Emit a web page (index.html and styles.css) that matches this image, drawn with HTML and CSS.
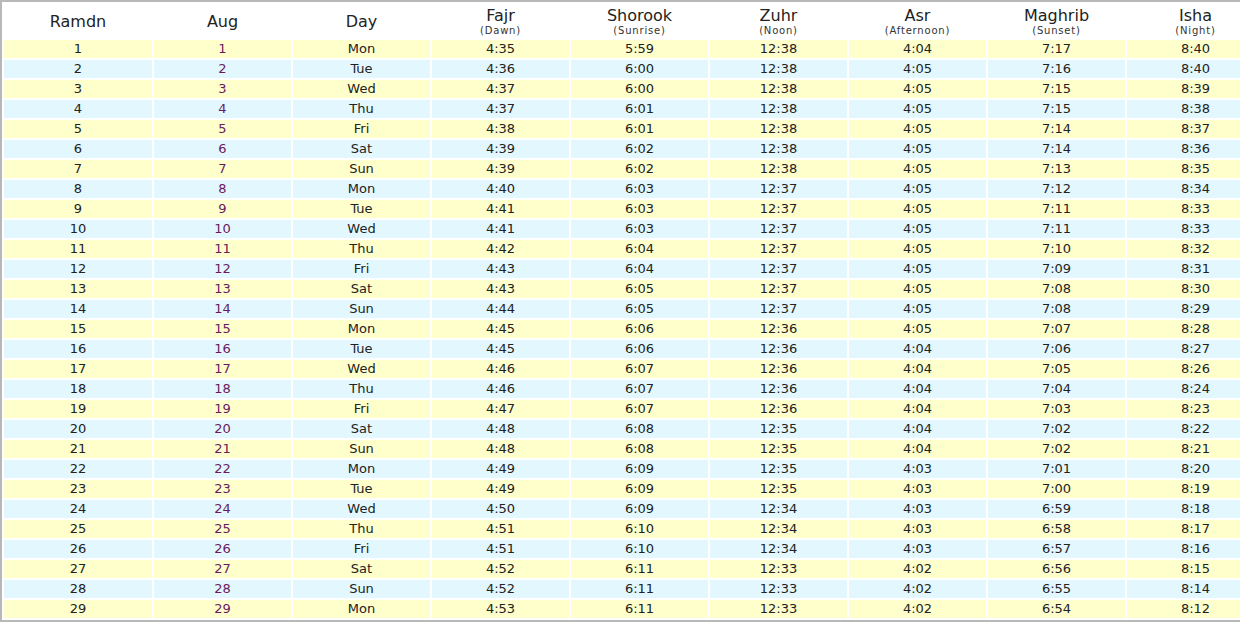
FILE: index.html
```html
<!DOCTYPE html>
<html>
<head>
<meta charset="utf-8">
<link rel="stylesheet" href="styles.css">
</head>
<body>
<table class="times">
<colgroup><col class="c-first"><col class="c"><col class="c"><col class="c"><col class="c"><col class="c"><col class="c"><col class="c"><col class="c"></colgroup>
<thead>
<tr>
<th><span class="t">Ramdn</span></th>
<th><span class="t">Aug</span></th>
<th><span class="t">Day</span></th>
<th><span class="t">Fajr</span><span class="s">(Dawn)</span></th>
<th><span class="t">Shorook</span><span class="s">(Sunrise)</span></th>
<th><span class="t">Zuhr</span><span class="s">(Noon)</span></th>
<th><span class="t">Asr</span><span class="s">(Afternoon)</span></th>
<th><span class="t">Maghrib</span><span class="s">(Sunset)</span></th>
<th><span class="t">Isha</span><span class="s">(Night)</span></th>
</tr>
</thead>
<tbody>
<tr><td>1</td><td class="g">1</td><td>Mon</td><td>4:35</td><td>5:59</td><td>12:38</td><td>4:04</td><td>7:17</td><td>8:40</td></tr>
<tr><td>2</td><td class="g">2</td><td>Tue</td><td>4:36</td><td>6:00</td><td>12:38</td><td>4:05</td><td>7:16</td><td>8:40</td></tr>
<tr><td>3</td><td class="g">3</td><td>Wed</td><td>4:37</td><td>6:00</td><td>12:38</td><td>4:05</td><td>7:15</td><td>8:39</td></tr>
<tr><td>4</td><td class="g">4</td><td>Thu</td><td>4:37</td><td>6:01</td><td>12:38</td><td>4:05</td><td>7:15</td><td>8:38</td></tr>
<tr><td>5</td><td class="g">5</td><td>Fri</td><td>4:38</td><td>6:01</td><td>12:38</td><td>4:05</td><td>7:14</td><td>8:37</td></tr>
<tr><td>6</td><td class="g">6</td><td>Sat</td><td>4:39</td><td>6:02</td><td>12:38</td><td>4:05</td><td>7:14</td><td>8:36</td></tr>
<tr><td>7</td><td class="g">7</td><td>Sun</td><td>4:39</td><td>6:02</td><td>12:38</td><td>4:05</td><td>7:13</td><td>8:35</td></tr>
<tr><td>8</td><td class="g">8</td><td>Mon</td><td>4:40</td><td>6:03</td><td>12:37</td><td>4:05</td><td>7:12</td><td>8:34</td></tr>
<tr><td>9</td><td class="g">9</td><td>Tue</td><td>4:41</td><td>6:03</td><td>12:37</td><td>4:05</td><td>7:11</td><td>8:33</td></tr>
<tr><td>10</td><td class="g">10</td><td>Wed</td><td>4:41</td><td>6:03</td><td>12:37</td><td>4:05</td><td>7:11</td><td>8:33</td></tr>
<tr><td>11</td><td class="g">11</td><td>Thu</td><td>4:42</td><td>6:04</td><td>12:37</td><td>4:05</td><td>7:10</td><td>8:32</td></tr>
<tr><td>12</td><td class="g">12</td><td>Fri</td><td>4:43</td><td>6:04</td><td>12:37</td><td>4:05</td><td>7:09</td><td>8:31</td></tr>
<tr><td>13</td><td class="g">13</td><td>Sat</td><td>4:43</td><td>6:05</td><td>12:37</td><td>4:05</td><td>7:08</td><td>8:30</td></tr>
<tr><td>14</td><td class="g">14</td><td>Sun</td><td>4:44</td><td>6:05</td><td>12:37</td><td>4:05</td><td>7:08</td><td>8:29</td></tr>
<tr><td>15</td><td class="g">15</td><td>Mon</td><td>4:45</td><td>6:06</td><td>12:36</td><td>4:05</td><td>7:07</td><td>8:28</td></tr>
<tr><td>16</td><td class="g">16</td><td>Tue</td><td>4:45</td><td>6:06</td><td>12:36</td><td>4:04</td><td>7:06</td><td>8:27</td></tr>
<tr><td>17</td><td class="g">17</td><td>Wed</td><td>4:46</td><td>6:07</td><td>12:36</td><td>4:04</td><td>7:05</td><td>8:26</td></tr>
<tr><td>18</td><td class="g">18</td><td>Thu</td><td>4:46</td><td>6:07</td><td>12:36</td><td>4:04</td><td>7:04</td><td>8:24</td></tr>
<tr><td>19</td><td class="g">19</td><td>Fri</td><td>4:47</td><td>6:07</td><td>12:36</td><td>4:04</td><td>7:03</td><td>8:23</td></tr>
<tr><td>20</td><td class="g">20</td><td>Sat</td><td>4:48</td><td>6:08</td><td>12:35</td><td>4:04</td><td>7:02</td><td>8:22</td></tr>
<tr><td>21</td><td class="g">21</td><td>Sun</td><td>4:48</td><td>6:08</td><td>12:35</td><td>4:04</td><td>7:02</td><td>8:21</td></tr>
<tr><td>22</td><td class="g">22</td><td>Mon</td><td>4:49</td><td>6:09</td><td>12:35</td><td>4:03</td><td>7:01</td><td>8:20</td></tr>
<tr><td>23</td><td class="g">23</td><td>Tue</td><td>4:49</td><td>6:09</td><td>12:35</td><td>4:03</td><td>7:00</td><td>8:19</td></tr>
<tr><td>24</td><td class="g">24</td><td>Wed</td><td>4:50</td><td>6:09</td><td>12:34</td><td>4:03</td><td>6:59</td><td>8:18</td></tr>
<tr><td>25</td><td class="g">25</td><td>Thu</td><td>4:51</td><td>6:10</td><td>12:34</td><td>4:03</td><td>6:58</td><td>8:17</td></tr>
<tr><td>26</td><td class="g">26</td><td>Fri</td><td>4:51</td><td>6:10</td><td>12:34</td><td>4:03</td><td>6:57</td><td>8:16</td></tr>
<tr><td>27</td><td class="g">27</td><td>Sat</td><td>4:52</td><td>6:11</td><td>12:33</td><td>4:02</td><td>6:56</td><td>8:15</td></tr>
<tr><td>28</td><td class="g">28</td><td>Sun</td><td>4:52</td><td>6:11</td><td>12:33</td><td>4:02</td><td>6:55</td><td>8:14</td></tr>
<tr><td>29</td><td class="g">29</td><td>Mon</td><td>4:53</td><td>6:11</td><td>12:33</td><td>4:02</td><td>6:54</td><td>8:12</td></tr>
</tbody>
</table>
</body>
</html>
```

FILE: styles.css
```css
html, body {
  margin: 0;
  padding: 0;
  background: #ffffff;
  overflow: hidden;
}

.times {
  table-layout: fixed;
  width: 1268px;
  border-collapse: separate;
  border-spacing: 2px;
  border: 2px solid #b8b8b8;
  font-family: "DejaVu Sans", Verdana, sans-serif;
  color: #222222;
}

.c-first { width: 148px; }
.c { width: 137px; }

.times th {
  height: 34px;
  padding: 0;
  font-weight: normal;
  text-align: center;
  vertical-align: middle;
  background: #ffffff;
}

.times th .t {
  display: block;
  font-size: 16px;
  line-height: 18px;
  padding-top: 1px;
}

.times th .s {
  display: block;
  font-size: 10px;
  line-height: 11px;
  letter-spacing: 0.8px;
  color: #333333;
}

.times td {
  height: 18px;
  padding: 0;
  font-size: 13px;
  line-height: 18px;
  text-align: center;
  vertical-align: middle;
}

.times tbody tr:nth-child(odd) td { background: #ffffcc; }
.times tbody tr:nth-child(even) td { background: #e2f8fe; }

.times td.g { color: #6a1a5e; }
```
